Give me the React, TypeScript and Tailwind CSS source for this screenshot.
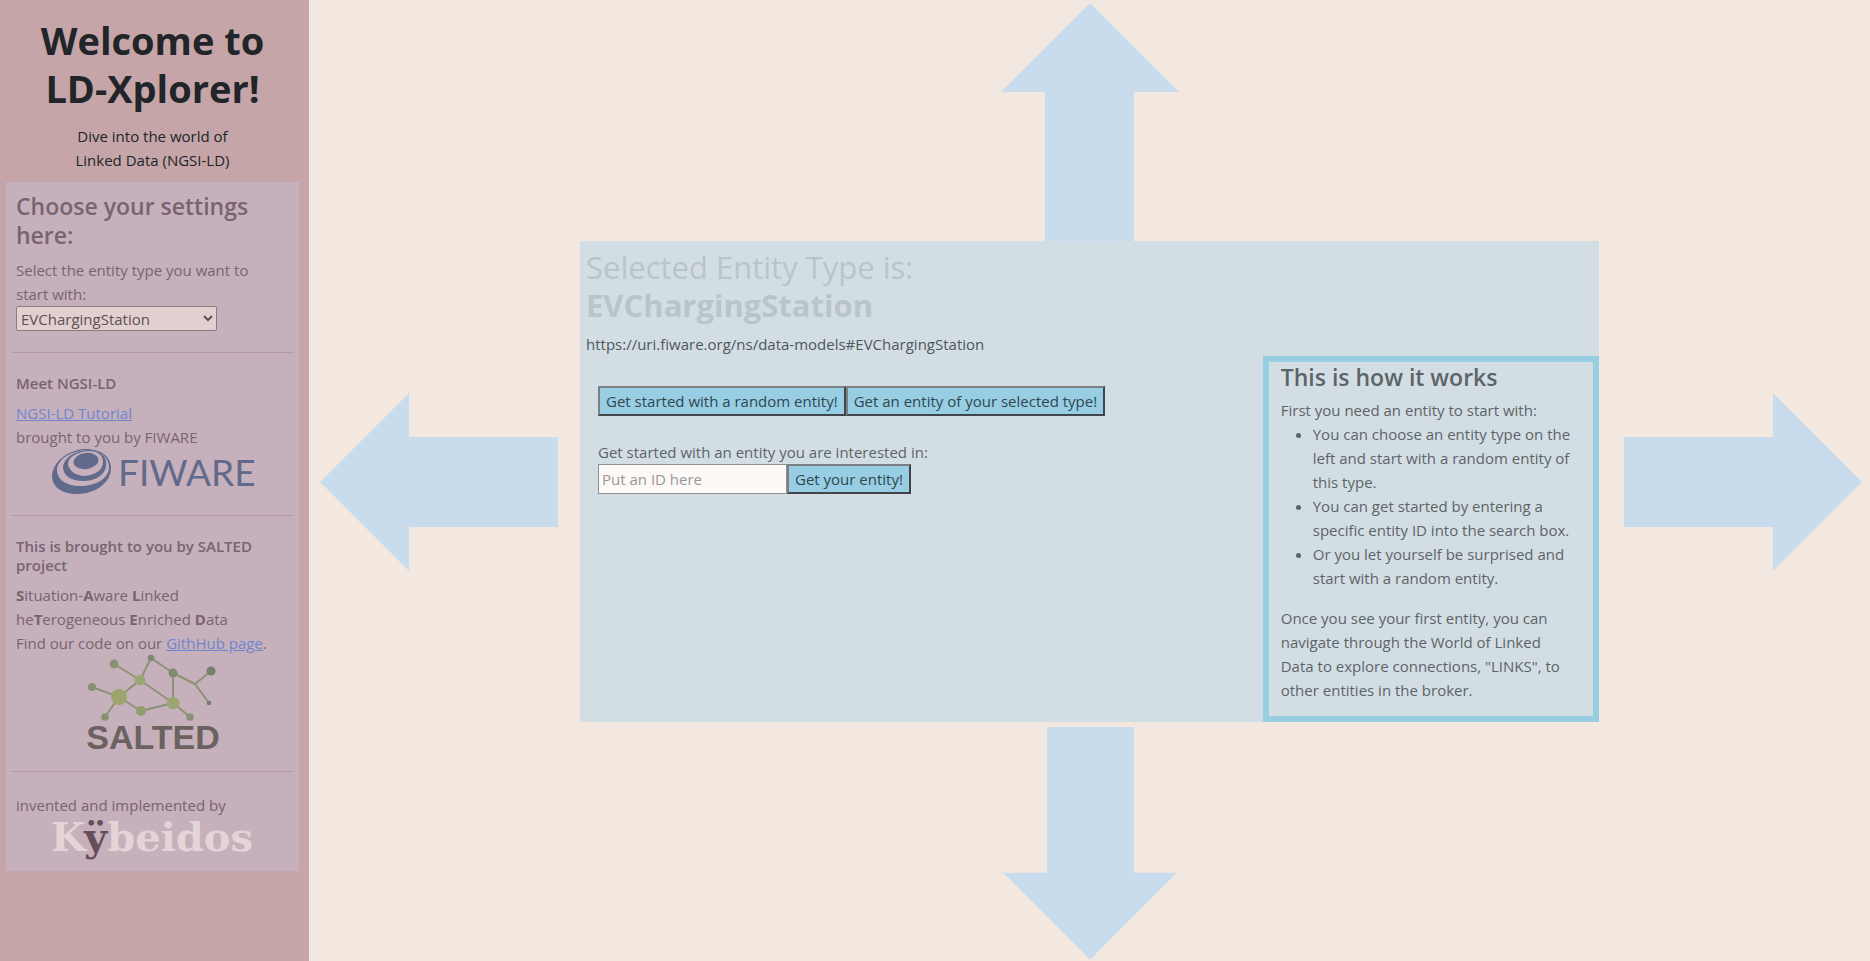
import React from "react";

function ArrowUp({ className }: { className: string }) {
  return (
    <svg viewBox="0 0 178 238" className={className} aria-hidden="true">
      <path d="M89 0 178 89H133V238H44V89H0Z" fill="#c9dcee" />
    </svg>
  );
}

function ArrowRight({ className }: { className: string }) {
  return (
    <svg viewBox="0 0 238 178" className={className} aria-hidden="true">
      <path d="M238 89 149 0V44H0V134H149V178Z" fill="#c9dcee" />
    </svg>
  );
}

function FiwareLogo() {
  return (
    <svg viewBox="0 0 202 45" className="mx-auto block h-[45px] w-[202px] overflow-visible" role="img" aria-label="FIWARE">
      <path
        fill="#626a8c"
        fillRule="evenodd"
        d="M33 0C48 0 59 7 59 19C59 34 43 45 25 45C10 45 0 38 0 27C1 13 15 1 33 0ZM34 1C18 2 5 11 5 21C5 31 15 37 28 37C45 37 57 29 57 18C57 8 48 1 34 1Z"
      />
      <path
        fill="#626a8c"
        fillRule="evenodd"
        d="M35 1C48 1 56 8 54 17C53 26 43 32 31 32C20 32 11 27 11 18C12 9 22 2 35 1ZM36 2C25 3 16 8 16 15C17 22 24 27 33 27C43 26 51 21 51 13C51 6 46 2 36 2Z"
      />
      <ellipse cx="34" cy="12" rx="12.500" ry="8" transform="rotate(-8 34 12)" fill="#626a8c" />
      <text x="66" y="37" fontFamily="Lato, sans-serif" fontSize="37" fill="#626a8c">
        FIWARE
      </text>
    </svg>
  );
}

const saltedEdges: [number, number, number, number][] = [
  [26, 9, 52, 25],
  [52, 25, 63, 3],
  [63, 3, 85, 18],
  [85, 18, 107, 29],
  [107, 29, 123, 16],
  [107, 29, 121, 48],
  [85, 18, 85, 48],
  [52, 25, 85, 48],
  [52, 25, 31, 42],
  [4, 32, 31, 42],
  [31, 42, 17, 62],
  [31, 42, 53, 56],
  [53, 56, 85, 48],
  [85, 48, 102, 62],
];

const saltedNodes: [number, number, number, string][] = [
  [26, 9, 4.5, "#879272"],
  [63, 3, 3.3, "#808a70"],
  [85, 18, 4.5, "#808a70"],
  [123, 16, 4.6, "#76806c"],
  [121, 48, 2.3, "#76806c"],
  [4, 32, 4, "#879272"],
  [52, 25, 5.3, "#9ba672"],
  [31, 42, 8, "#9ba56d"],
  [85, 48, 6.3, "#9ba672"],
  [53, 56, 5, "#939e70"],
  [17, 62, 3.8, "#879272"],
  [102, 62, 3.8, "#879272"],
];

function SaltedLogo() {
  return (
    <svg viewBox="0 0 130 95" className="mx-auto block h-[95px] w-[130px] overflow-visible" role="img" aria-label="SALTED">
      {saltedEdges.map(([x1, y1, x2, y2], i) => (
        <line key={i} x1={x1} y1={y1} x2={x2} y2={y2} stroke="#8d9276" strokeWidth="2" />
      ))}
      {saltedNodes.map(([cx, cy, r, fill], i) => (
        <circle key={i} cx={cx} cy={cy} r={r} fill={fill} />
      ))}
      <text
        x="65"
        y="94"
        textAnchor="middle"
        fontFamily="Liberation Sans, sans-serif"
        fontWeight="700"
        fontSize="34"
        fill="#6b625f"
      >
        SALTED
      </text>
    </svg>
  );
}

function KybeidosLogo() {
  return (
    <svg viewBox="0 0 202 44" className="mx-auto block h-11 w-[202px] overflow-visible" role="img" aria-label="Kÿbeidos">
      <text
        x="100"
        y="34"
        textAnchor="middle"
        fontFamily="DejaVu Serif, serif"
        fontWeight="700"
        fontSize="40"
        fill="#e4d3d7"
      >
        K<tspan fill="#664f58">ÿ</tspan>beidos
      </text>
    </svg>
  );
}

function Divider() {
  return <hr className="my-4 border-t border-[#b39ca7]" />;
}

function Sidebar() {
  return (
    <aside className="w-[309px] shrink-0 bg-[#c5a5a7] pt-4 pr-2.5 pb-6 pl-1.5">
      <header className="text-center text-[#212529]">
        <h1 className="text-[38px] leading-12 font-bold">
          Welcome to
          <br />
          LD-Xplorer!
        </h1>
        <p className="mt-3 mb-2.5">
          Dive into the world of
          <br />
          Linked Data (NGSI-LD)
        </p>
      </header>
      <div className="bg-[#c6b0bc] p-[5px] text-[#786470]">
        <section className="p-[5px]">
          <h2 className="mb-2 text-[23px] leading-[29px] font-semibold">Choose your settings here:</h2>
          <label htmlFor="entity-type" className="block pr-6">
            Select the entity type you want to start with:
          </label>
          <select
            id="entity-type"
            className="block h-[25px] w-[201px] rounded-[2px] border border-[#8d7b82] bg-[#e2d0d1] text-[#5d5054]"
          >
            <option>EVChargingStation</option>
          </select>
        </section>
        <Divider />
        <section className="p-[5px]">
          <h3 className="mb-2 leading-[19px] font-semibold">Meet NGSI-LD</h3>
          <a href="#tutorial" className="text-[#6f86cc] underline">
            NGSI-LD Tutorial
          </a>
          <p>brought to you by FIWARE</p>
          <FiwareLogo />
        </section>
        <Divider />
        <section className="p-[5px]">
          <h3 className="mb-2 leading-[19px] font-semibold">This is brought to you by SALTED project</h3>
          <p>
            <b>S</b>ituation-<b>A</b>ware <b>L</b>inked
            <br />
            he<b>T</b>erogeneous <b>E</b>nriched <b>D</b>ata
            <br />
            Find our code on our{" "}
            <a href="#github" className="text-[#6f86cc] underline">
              GithHub page
            </a>
            .
          </p>
          <SaltedLogo />
        </section>
        <Divider />
        <section className="p-[5px]">
          <p>invented and implemented by</p>
          <KybeidosLogo />
        </section>
      </div>
    </aside>
  );
}

const buttonClass =
  "h-[30px] border-2 border-t-[#7c8082] border-r-[#3f4548] border-b-[#3f4548] border-l-[#7c8082] bg-[#97cee3] px-1.5 leading-6 text-[#32474f]";

function EntityPanel() {
  return (
    <div className="flex min-h-[50vh] flex-col bg-[#d3dee4] text-[#5d6468]">
      <div className="px-1.5 pt-[7px]">
        <h2 className="mb-2 text-[31px] leading-[38px] font-medium text-[#bac4cb]">
          Selected Entity Type is:
          <br />
          <b>EVChargingStation</b>
        </h2>
        <p className="text-[#50575b]">https://uri.fiware.org/ns/data-models#EVChargingStation</p>
      </div>
      <div className="flex grow items-stretch justify-between">
        <div className="pt-[30px] pl-[18px]">
          <div className="flex">
            <button type="button" className={buttonClass}>
              Get started with a random entity!
            </button>
            <button type="button" className={buttonClass}>
              Get an entity of your selected type!
            </button>
          </div>
          <form className="mt-6">
            <label htmlFor="entity-id" className="block">
              Get started with an entity you are interested in:
            </label>
            <div className="flex">
              <input
                id="entity-id"
                type="text"
                placeholder="Put an ID here"
                className="h-[30px] w-[189px] border border-[#8b9296] bg-[#fdf9f6] px-[3px] placeholder:text-[#999796]"
              />
              <button type="button" className={buttonClass}>
                Get your entity!
              </button>
            </div>
          </form>
        </div>
        <section className="w-[33%] border-6 border-[#98cee2] px-3 pt-px pb-3.5">
          <h2 className="mb-1.5 text-[23px] leading-[29px] font-semibold">This is how it works</h2>
          <p>First you need an entity to start with:</p>
          <ul className="mb-4 list-disc pl-8">
            <li>You can choose an entity type on the left and start with a random entity of this type.</li>
            <li>You can get started by entering a specific entity ID into the search box.</li>
            <li>Or you let yourself be surprised and start with a random entity.</li>
          </ul>
          <p className="pr-4">
            Once you see your first entity, you can navigate through the World of Linked Data to explore connections,
            "LINKS", to other entities in the broker.
          </p>
        </section>
      </div>
    </div>
  );
}

export default function App() {
  return (
    <div className="flex min-h-screen bg-[#f2e8df] font-['Open_Sans','Noto_Sans',sans-serif] text-[15px] leading-6">
      <Sidebar />
      <main className="grid grow grid-cols-[271px_1fr_271px] grid-rows-[1fr_auto_1fr] items-center justify-items-center pt-0.5">
        <ArrowUp className="col-start-2 row-start-1 w-[178px]" />
        <ArrowRight className="col-start-1 row-start-2 mr-3 w-[238px] rotate-180" />
        <div className="col-start-2 row-start-2 w-full">
          <EntityPanel />
        </div>
        <ArrowRight className="col-start-3 row-start-2 ml-4 w-[238px]" />
        <ArrowUp className="col-start-2 row-start-3 mt-1 w-[174px] rotate-180" />
      </main>
    </div>
  );
}
